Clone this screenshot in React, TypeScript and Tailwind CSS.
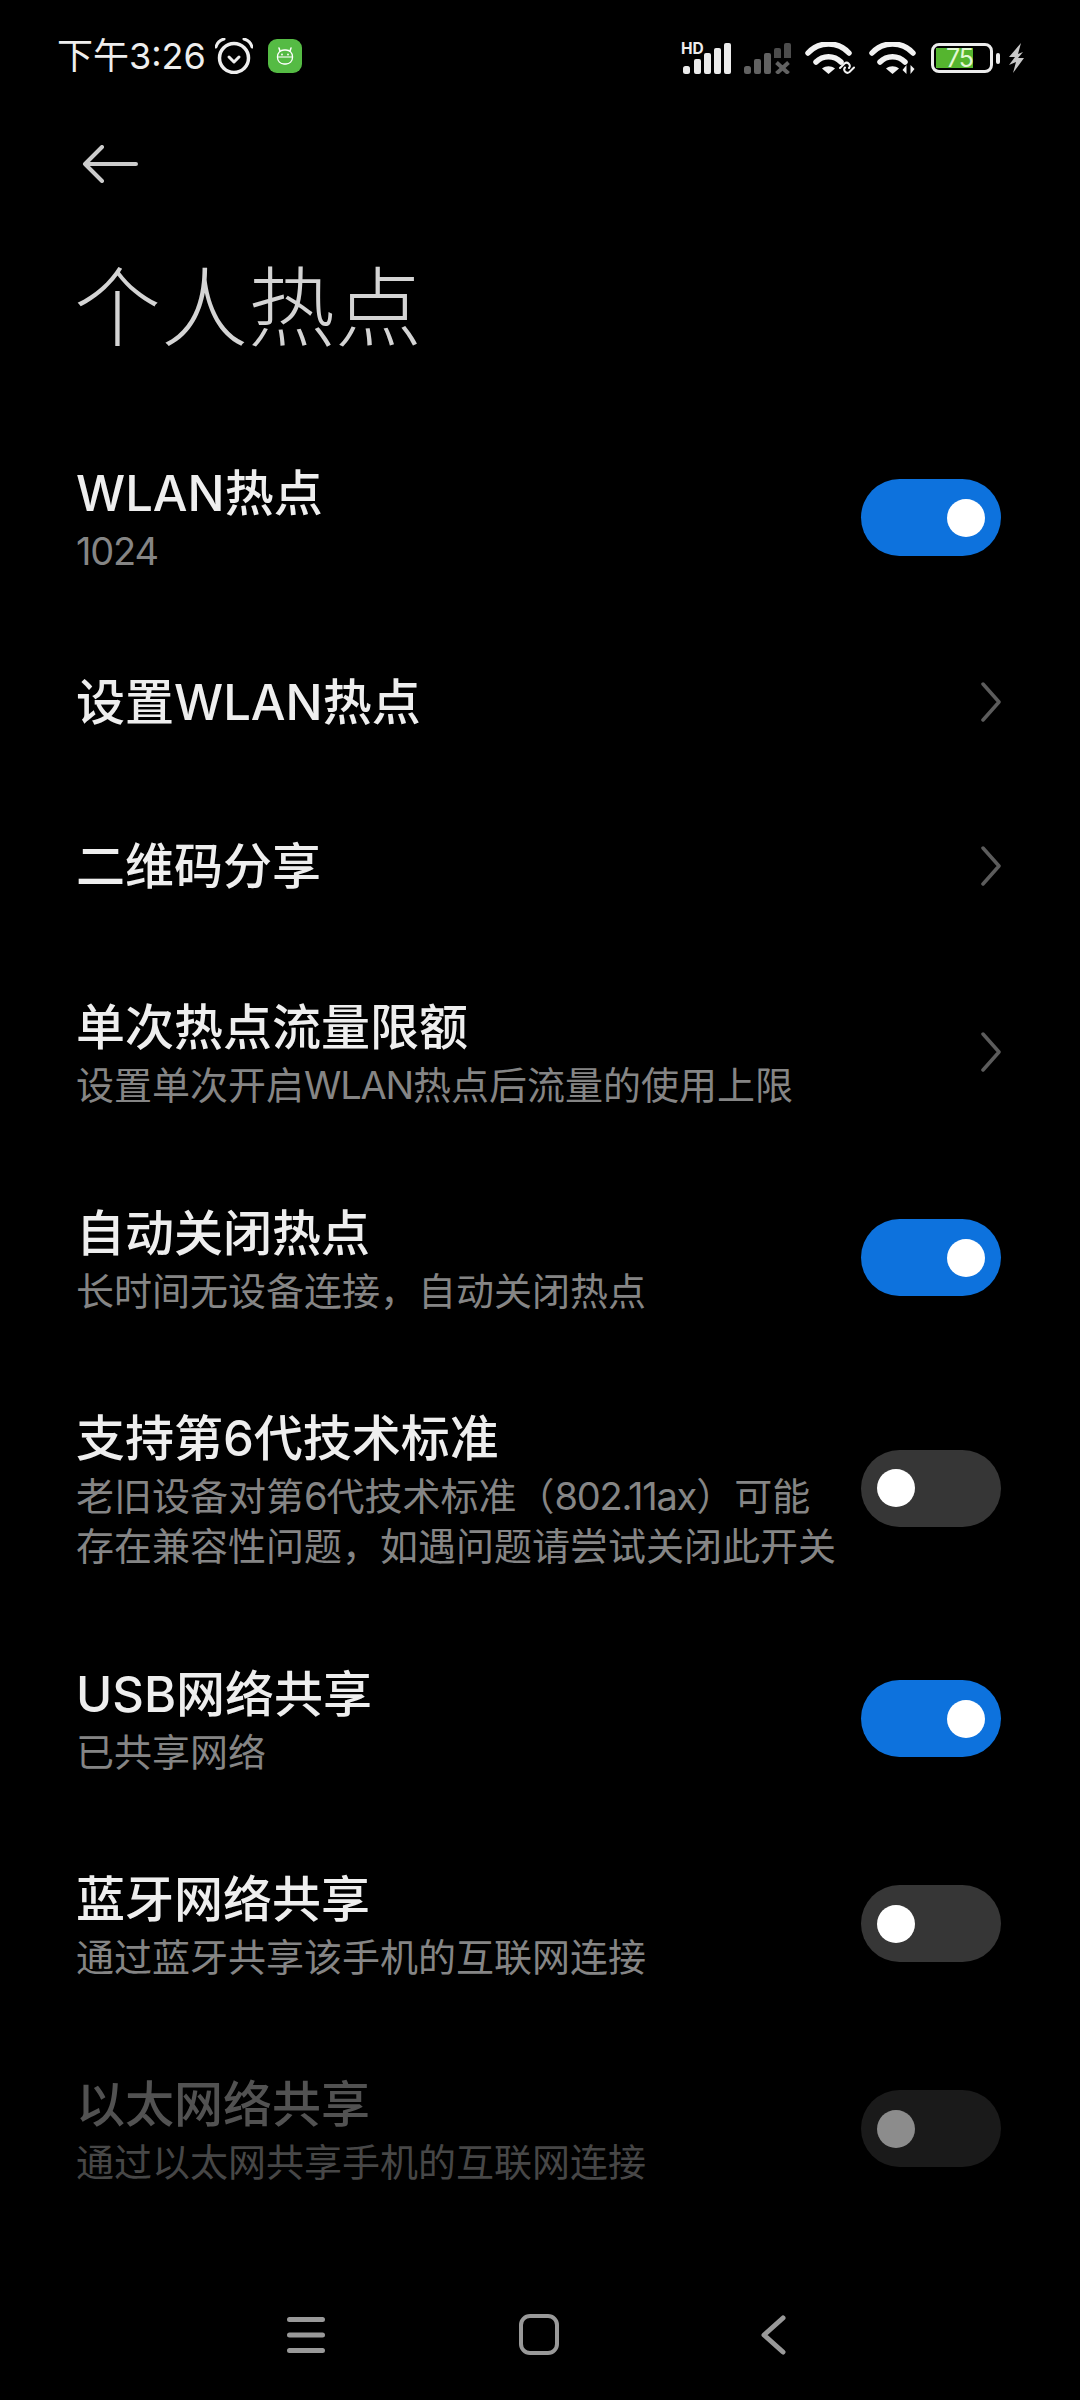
const font = "font-['Inter','Noto_Sans_CJK_SC',sans-serif]";

const SignalFull = () => (
  <svg width="50" height="32" viewBox="0 0 50 32" className="text-[#ececec] overflow-visible">
    <text x="0" y="12" fontSize="15.5" fontWeight="700" fill="currentColor" fontFamily="Inter, sans-serif">HD</text>
    <rect x="2" y="24" width="7" height="8" rx="2.5" fill="currentColor" />
    <rect x="13" y="17" width="7" height="15" rx="2" fill="currentColor" />
    <rect x="23" y="11" width="7" height="21" rx="2" fill="currentColor" />
    <rect x="33" y="6" width="7" height="26" rx="2" fill="currentColor" />
    <rect x="43" y="1" width="7" height="31" rx="2" fill="currentColor" />
  </svg>
);

const SignalOff = () => (
  <svg width="48" height="32" viewBox="0 0 48 32" className="text-[#626262]">
    <rect x="1" y="24" width="7" height="8" rx="2.5" fill="currentColor" />
    <rect x="11" y="17" width="7" height="15" rx="2" fill="currentColor" />
    <rect x="21" y="11" width="7" height="21" rx="2" fill="currentColor" />
    <path d="M31 8a2 2 0 012-2h3a2 2 0 012 2v8h-7z" fill="#4c4c4c" />
    <path d="M41 3a2 2 0 012-2h3a2 2 0 012 2v13h-7z" fill="#4c4c4c" />
    <path d="M33.5 20.5l12 11M45.5 20.5l-12 11" stroke="currentColor" strokeWidth="4" fill="none" />
  </svg>
);

const WifiBase = ({ children }: { children?: React.ReactNode }) => (
  <svg width="50" height="32" viewBox="0 0 50 32" fill="none" className="text-[#f2f2f2]">
    <path d="M3 11C14 -1 33 -1 44 11" stroke="currentColor" strokeWidth="5.5" strokeLinecap="round" />
    <path d="M11 20C18 13 29 13 36 20" stroke="currentColor" strokeWidth="5.5" strokeLinecap="round" />
    <path d="M17 26.5L23.5 32L30 26.5C26 23.5 21 23.5 17 26.5Z" fill="currentColor" />
    {children}
  </svg>
);

const Battery = () => (
  <div className="flex items-center gap-[3px]">
    <div className="w-[62px] h-[30px] rounded-[8px] border-[3px] border-[#ececec] p-[2px] flex">
      <div className="w-[37px] h-full bg-[#55b52f] flex items-center justify-end">
        <span className="text-[25px] leading-none text-[#e2f8d4] font-['Inter',sans-serif] tracking-[-1px]">75</span>
      </div>
    </div>
    <div className="w-[4px] h-[11px] bg-[#ececec] rounded-[2px]" />
  </div>
);

const Toggle = ({ on, disabled }: { on?: boolean; disabled?: boolean }) => (
  <div
    className={`w-[140px] h-[77px] rounded-full flex items-center px-[16px] shrink-0 ${
      on ? "bg-[#0d72dd] justify-end" : disabled ? "bg-[#1a1a1a]" : "bg-[#363636]"
    }`}
  >
    <div className={`w-[38px] h-[38px] rounded-full ${disabled ? "bg-[#8c8c8c]" : "bg-white"}`} />
  </div>
);

const Chevron = () => (
  <svg width="20" height="40" viewBox="0 0 20 40" fill="none" className="shrink-0">
    <path d="M2 2L18 20L2 38" stroke="#5c5c5c" strokeWidth="3.5" strokeLinecap="round" strokeLinejoin="round" />
  </svg>
);

// latin runs in the subtitles sit tighter than the CJK around them
const SubText = ({ text }: { text: string }) => (
  <>
    {text.split(/([A-Za-z0-9.]+)/).map((part, i) =>
      i % 2 ? (
        <span key={i} className="tracking-[-1.2px]">
          {part}
        </span>
      ) : (
        part
      ),
    )}
  </>
);

type RowProps = {
  title: string;
  sub?: string[];
  on?: boolean;
  toggle?: boolean;
  disabled?: boolean;
  h: string;
};

const Row = ({ title, sub, on, toggle, disabled, h }: RowProps) => (
  <div className={`flex items-center justify-between pl-[76px] pr-[79px] ${h}`}>
    <div className="flex flex-col whitespace-nowrap pt-[2px]">
      <div className={`text-[49px] font-medium ${sub ? "leading-[64px]" : "leading-[60px]"} ${disabled ? "text-[#525252]" : "text-[#eeeeee]"}`}>
        {title}
      </div>
      {sub?.map((line) => (
        <div key={line} className={`text-[38px] leading-[50px] ${disabled ? "text-[#474747]" : "text-[#858585]"}`}>
          <SubText text={line} />
        </div>
      ))}
    </div>
    {toggle ? <Toggle on={on} disabled={disabled} /> : <Chevron />}
  </div>
);

export default function App() {
  return (
    <div className={`w-[1080px] h-[2400px] bg-black flex flex-col ${font}`}>
      {/* status bar */}
      <div className="h-[145px] shrink-0 pt-[38px] pl-[57px] pr-[55px] flex justify-between items-start">
        <div className="flex items-center gap-[10px] h-[36px]">
          <span className="w-[148px] text-[36px] leading-none text-[#eeeeee] whitespace-nowrap">下午3:26</span>
          <svg width="38" height="36" viewBox="0 0 38 36" fill="none">
            <circle cx="19" cy="20" r="14.5" stroke="#eee" strokeWidth="3.5" />
            <path d="M14 19l5 5 5-5" stroke="#eee" strokeWidth="3" strokeLinecap="round" strokeLinejoin="round" />
            <path d="M1 9C2 5 5 2 9 1M37 9C36 5 33 2 29 1" stroke="#eee" strokeWidth="3" strokeLinecap="round" />
          </svg>
          <div className="w-[34px] h-[34px] ml-[5px] rounded-[9px] bg-[#55bb44] flex items-center justify-center">
            <svg width="20" height="20" viewBox="0 0 20 20" fill="none">
              <path d="M5 5L4 2M15 5l1-3" stroke="#fff" strokeWidth="1.5" strokeLinecap="round" />
              <rect x="2.5" y="4" width="15" height="14" rx="6.5" stroke="#fff" strokeWidth="1.3" />
              <path d="M3 11h14" stroke="#fff" strokeWidth="1.1" />
              <circle cx="7" cy="8.5" r="0.9" fill="#fff" />
              <circle cx="13" cy="8.5" r="0.9" fill="#fff" />
            </svg>
          </div>
        </div>
        <div className="flex items-center h-[36px] mt-[2px]">
          <SignalFull />
          <div className="ml-[12px]">
            <SignalOff />
          </div>
          <div className="ml-[14px]">
            <WifiBase>
              <path d="M35 26l4.5-4.5a3.2 3.2 0 014.5 4.5M49 25.5l-4.5 4.5a3.2 3.2 0 01-4.5-4.5" stroke="currentColor" strokeWidth="2" strokeLinecap="round" />
            </WifiBase>
          </div>
          <div className="ml-[14px]">
            <WifiBase>
              <path d="M37.5 23v9l-4-4zM41.5 32v-9l4 4z" fill="currentColor" />
            </WifiBase>
          </div>
          <div className="ml-[12px]">
            <Battery />
          </div>
          <svg width="17" height="30" viewBox="0 0 17 30" className="ml-[8px]">
            <path d="M13 0L1 14h6L1 22l7-3-3 11 11-15h-6l5-6-5 2z" fill="#c8c8c8" />
          </svg>
        </div>
      </div>

      {/* back arrow */}
      <div className="pl-[82px] h-[38px] shrink-0">
        <svg width="56" height="38" viewBox="0 0 56 38" fill="none">
          <path d="M54 19H3M20 2L3 19l17 17" stroke="#cccccc" strokeWidth="4" strokeLinecap="round" strokeLinejoin="round" />
        </svg>
      </div>

      {/* heading */}
      <div className="pl-[74px] h-[232px] pt-[76px] shrink-0">
        <h1 className="text-[87px] leading-[100px] font-extralight text-[#d4d4d4]">个人热点</h1>
      </div>

      {/* settings list */}
      <Row h="h-[205px]" title="WLAN热点" sub={["1024"]} toggle on />
      <Row h="h-[164px]" title="设置WLAN热点" />
      <Row h="h-[164px]" title="二维码分享" />
      <Row h="h-[207px]" title="单次热点流量限额" sub={["设置单次开启WLAN热点后流量的使用上限"]} />
      <Row h="h-[205px]" title="自动关闭热点" sub={["长时间无设备连接，自动关闭热点"]} toggle on />
      <Row
        h="h-[256px]"
        title="支持第6代技术标准"
        sub={["老旧设备对第6代技术标准（802.11ax）可能", "存在兼容性问题，如遇问题请尝试关闭此开关"]}
        toggle
      />
      <Row h="h-[205px]" title="USB网络共享" sub={["已共享网络"]} toggle on />
      <Row h="h-[205px]" title="蓝牙网络共享" sub={["通过蓝牙共享该手机的互联网连接"]} toggle />
      <Row h="h-[205px]" title="以太网络共享" sub={["通过以太网共享手机的互联网连接"]} toggle disabled />

      {/* nav bar */}
      <div className="h-[169px] pt-[83px] pl-[287px] flex items-start">
        <div className="flex items-center h-[41px]">
          <svg width="38" height="38" viewBox="0 0 38 38" fill="none">
            <path d="M2.5 3.5h33M2.5 19h33M2.5 34.5h33" stroke="#999" strokeWidth="5" strokeLinecap="round" />
          </svg>
          <div className="w-[40px] h-[41px] ml-[194px] border-[4px] border-[#999] rounded-[11px]" />
          <svg width="26" height="40" viewBox="0 0 26 40" fill="none" className="ml-[201px]">
            <path d="M23 3L4 20l19 17" stroke="#999" strokeWidth="5" strokeLinecap="round" strokeLinejoin="round" />
          </svg>
        </div>
      </div>
    </div>
  );
}
